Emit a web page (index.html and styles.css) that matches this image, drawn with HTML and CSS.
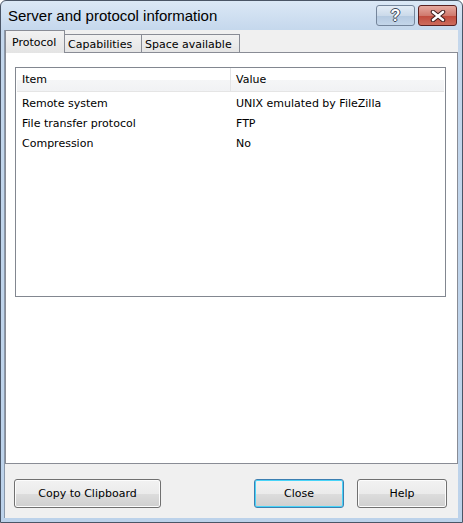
FILE: index.html
```html
<!DOCTYPE html>
<html lang="en">
<head>
    <meta charset="UTF-8">
    <title>Server and protocol information</title>
    <link rel="stylesheet" href="styles.css">
</head>
<body>
    <div class="window">
        <div class="titlebar">
            <span class="title">Server and protocol information</span>
            <div class="caption-buttons">
                <div class="cap-btn cap-help">?</div>
                <div class="cap-btn cap-close">
                    <svg width="16" height="12" viewBox="0 0 16 12">
                        <path d="M3 2 L13 10 M13 2 L3 10" stroke="#3a1a1a" stroke-width="4.5" stroke-linecap="round"/>
                        <path d="M3 2 L13 10 M13 2 L3 10" stroke="#fff" stroke-width="2.6" stroke-linecap="round"/>
                    </svg>
                </div>
            </div>
        </div>

        <div class="client">
            <div class="tabs">
                <div class="tab selected">Protocol</div>
                <div class="tab">Capabilities</div>
                <div class="tab">Space available</div>
            </div>

            <div class="panel">
                <div class="list">
                    <div class="list-head">
                        <div class="col-item">Item</div>
                        <div class="col-value">Value</div>
                    </div>
                    <div class="row">
                        <div class="col-item">Remote system</div>
                        <div class="col-value">UNIX emulated by FileZilla</div>
                    </div>
                    <div class="row">
                        <div class="col-item">File transfer protocol</div>
                        <div class="col-value">FTP</div>
                    </div>
                    <div class="row">
                        <div class="col-item">Compression</div>
                        <div class="col-value">No</div>
                    </div>
                </div>
            </div>

            <div class="buttons">
                <button class="btn btn-copy">Copy to Clipboard</button>
                <div class="spacer"></div>
                <button class="btn btn-default">Close</button>
                <button class="btn">Help</button>
            </div>
        </div>
    </div>
</body>
</html>
```

FILE: styles.css
```css
* {
    box-sizing: border-box;
}

body {
    margin: 0;
    font-family: 'DejaVu Sans', sans-serif;
    font-size: 11px;
    color: #000;
    background-color: #fff;
}

.window {
    width: 463px;
    height: 523px;
    border: 1px solid #4a5566;
    border-radius: 6px 6px 0 0;
    padding: 0 4px 4px 3px;
    background: linear-gradient(#dbe8f6, #c4d7ec 30px, #bcd2ea);
    display: flex;
    flex-direction: column;
}

.titlebar {
    height: 29px;
    display: flex;
    align-items: flex-start;
    justify-content: space-between;
}

.title {
    font-family: 'Liberation Sans', sans-serif;
    font-size: 15px;
    margin: 6px 0 0 4px;
    color: #000;
}

.caption-buttons {
    display: flex;
    gap: 3px;
    margin-top: 4px;
    margin-right: 1px;
}

.cap-btn {
    width: 39px;
    height: 21px;
    border-radius: 3px;
    display: flex;
    align-items: center;
    justify-content: center;
}

.cap-help {
    border: 1px solid #74859b;
    background: linear-gradient(#e3ecf6, #cbdaea 50%, #b4c9e0 51%, #c4d6ea);
    color: #fff;
    font-family: 'Liberation Sans', sans-serif;
    font-weight: bold;
    font-size: 16px;
    text-shadow: -1px 0 #3e4a5a, 1px 0 #3e4a5a, 0 -1px #3e4a5a, 0 1px #3e4a5a;
}

.cap-close {
    border: 1px solid #5a2020;
    background: linear-gradient(#e6a9a0, #d07a6e 50%, #c04a3c 51%, #cd6b5c);
}

.client {
    flex: 1;
    background-color: #f0f0f0;
    border-left: 1px solid #8a98aa;
    display: flex;
    flex-direction: column;
}

.tabs {
    height: 23px;
    display: flex;
    align-items: flex-end;
}

.tab {
    height: 19px;
    padding: 0 3px;
    border: 1px solid #898c95;
    border-bottom: none;
    border-left: none;
    background: linear-gradient(#f2f2f2, #e4e4e4);
    line-height: 19px;
}

.tab.selected {
    position: relative;
    z-index: 1;
    height: 23px;
    padding: 0 6px;
    border-left: 1px solid #898c95;
    background-color: #fff;
    line-height: 24px;
    width: 60px;
}

.tabs .tab:nth-child(2) {
    width: 77px;
}

.tabs .tab:nth-child(3) {
    width: 98px;
}

.panel {
    height: 412px;
    margin-top: -1px;
    border: 1px solid #898c95;
    background-color: #fff;
    padding: 14px 11px 0 9px;
}

.list {
    height: 230px;
    border: 1px solid #828790;
    background-color: #fff;
    padding: 0 1px;
}

.list-head {
    display: flex;
    height: 24px;
    background: linear-gradient(#fff, #fff 50%, #f5f6f7 51%, #f1f2f4);
    border-bottom: 1px solid #e5e5e5;
    margin-bottom: 2px;
}

.list-head .col-item {
    border-right: 1px solid #e3e4e6;
}

.list-head div {
    line-height: 24px;
}

.col-item {
    width: 214px;
    padding-left: 5px;
}

.col-value {
    padding-left: 5px;
}

.row {
    display: flex;
    height: 20px;
    line-height: 20px;
}

.buttons {
    flex: 1;
    display: flex;
    align-items: flex-start;
    gap: 13px;
    padding: 15px 11px 0 9px;
}

.spacer {
    flex: 1;
}

.btn {
    width: 90px;
    height: 29px;
    font-family: 'DejaVu Sans', sans-serif;
    font-size: 11px;
    color: #000;
    border: 1px solid #707070;
    border-radius: 3px;
    background: linear-gradient(#f2f2f2, #ebebeb 50%, #dddddd 51%, #cfcfcf);
    box-shadow: inset 0 0 0 1px #fcfcfc;
    padding: 0;
}

.btn-copy {
    width: 147px;
}

.btn-default {
    border-color: #3c7fb1;
    box-shadow: inset 0 0 0 1px #48d4f8;
}
```
